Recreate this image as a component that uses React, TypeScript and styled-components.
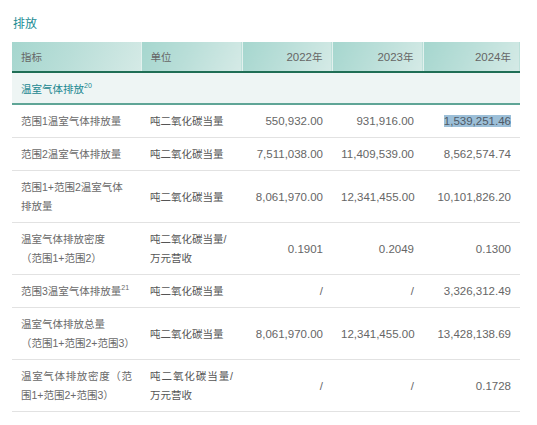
import React from "react";
import styled, { createGlobalStyle } from "styled-components";

const Global = createGlobalStyle`
  html, body { margin: 0; padding: 0; background: #ffffff; }
  body {
    font-family: "Liberation Sans", "Noto Sans CJK SC", sans-serif;
    text-spacing-trim: space-all;
    text-autospace: no-autospace;
  }
`;

const Page = styled.div`
  width: 508px;
  padding: 16px 0 0 12px;
`;

const Title = styled.div`
  font-size: 12px;
  line-height: 16px;
  color: #1a8b93;
  padding-left: 1px;
  margin-bottom: 10px;
`;

const Table = styled.table`
  width: 508px;
  table-layout: fixed;
  border-collapse: collapse;
  border-spacing: 0;
`;

const HeadCell = styled.th<{ $right?: boolean }>`
  height: 29px;
  padding: 0 9px;
  text-align: ${(p) => (p.$right ? "right" : "left")};
  font-weight: normal;
  font-size: ${(p) => (p.$right ? "11.5px" : "10.5px")};
  color: #666;
  background: linear-gradient(115deg, #a5d6ce 0%, #b9ded8 45%, #d5eae6 100%);
  border-right: 1px solid #e2f1ee;
  border-bottom: 2px solid #1f6e55;
  &:last-child { border-right: none; }
  span { font-size: 10.5px; }
`;

const SectionCell = styled.td`
  height: 30px;
  padding: 0 9px;
  background: #eef5f4;
  color: #1a8790;
  font-size: 10.5px;
  border-bottom: 2px solid #5fa596;
  sup { font-size: 7px; vertical-align: 5px; line-height: 0; }
`;

const Row = styled.tr`
  border-bottom: 1px solid #e2e2e2;
`;

const TextCell = styled.td<{ $justify?: boolean; $dark?: boolean }>`
  padding: 7px 9px 6px;
  font-size: 10.5px;
  line-height: 19px;
  color: ${(p) => (p.$dark ? "#555" : "#6a6a6a")};
  text-align: ${(p) => (p.$justify ? "justify" : "left")};
  vertical-align: middle;
  sup { font-size: 7px; vertical-align: 5px; line-height: 0; }
`;

const Line = styled.span`
  white-space: nowrap;
`;

const NumCell = styled.td`
  padding: 7px 9px 6px;
  font-size: 11.5px;
  line-height: 19px;
  color: #666;
  text-align: right;
  vertical-align: middle;
  white-space: nowrap;
`;

const Selected = styled.span`
  background: #9cbfd8;
  color: #4f5a66;
`;

type RowData = {
  name: React.ReactNode;
  unit: React.ReactNode;
  values: React.ReactNode[];
  justify?: boolean;
};

const rows: RowData[] = [
  { name: "范围1温室气体排放量", unit: "吨二氧化碳当量", values: ["550,932.00", "931,916.00", <Selected key="s">1,539,251.46</Selected>] },
  { name: "范围2温室气体排放量", unit: "吨二氧化碳当量", values: ["7,511,038.00", "11,409,539.00", "8,562,574.74"] },
  { name: "范围1+范围2温室气体排放量", unit: "吨二氧化碳当量", values: ["8,061,970.00", "12,341,455.00", "10,101,826.20"] },
  {
    name: (<>温室气体排放密度<br /><Line>（范围1+范围2）</Line></>),
    unit: (<>吨二氧化碳当量/<br />万元营收</>),
    values: ["0.1901", "0.2049", "0.1300"],
  },
  { name: (<>范围3温室气体排放量<sup>21</sup></>), unit: "吨二氧化碳当量", values: ["/", "/", "3,326,312.49"] },
  {
    name: (<>温室气体排放总量<br /><Line>（范围1+范围2+范围3）</Line></>),
    unit: "吨二氧化碳当量",
    values: ["8,061,970.00", "12,341,455.00", "13,428,138.69"],
  },
  {
    name: "温室气体排放密度（范围1+范围2+范围3）",
    unit: "吨二氧化碳当量/万元营收",
    values: ["/", "/", "0.1728"],
    justify: true,
  },
];

export default function App() {
  return (
    <>
      <Global />
      <Page>
        <Title>排放</Title>
        <Table>
          <colgroup>
            <col style={{ width: 129 }} />
            <col style={{ width: 101 }} />
            <col style={{ width: 90 }} />
            <col style={{ width: 91 }} />
            <col style={{ width: 97 }} />
          </colgroup>
          <thead>
            <tr>
              <HeadCell>指标</HeadCell>
              <HeadCell>单位</HeadCell>
              <HeadCell $right>2022<span>年</span></HeadCell>
              <HeadCell $right>2023<span>年</span></HeadCell>
              <HeadCell $right>2024<span>年</span></HeadCell>
            </tr>
          </thead>
          <tbody>
            <tr>
              <SectionCell colSpan={5}>
                温室气体排放<sup>20</sup>
              </SectionCell>
            </tr>
            {rows.map((r, i) => (
              <Row key={i}>
                <TextCell $justify={r.justify}>{r.name}</TextCell>
                <TextCell $justify={r.justify} $dark>{r.unit}</TextCell>
                {r.values.map((v, j) => (
                  <NumCell key={j}>{v}</NumCell>
                ))}
              </Row>
            ))}
          </tbody>
        </Table>
      </Page>
    </>
  );
}
